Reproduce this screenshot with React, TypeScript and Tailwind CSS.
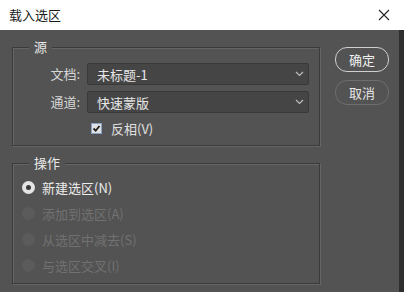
import React from 'react';

const cjk = "font-['Noto_Sans_CJK_SC','Noto_Sans',sans-serif]";

function Chevron() {
  return (
    <svg width="9" height="6" viewBox="0 0 9 6" className="shrink-0">
      <path d="M1 1 L4.5 4.5 L8 1" fill="none" stroke="#bdbdbd" strokeWidth="1.2" />
    </svg>
  );
}

function Select({ value }: { value: string }) {
  return (
    <div className="w-[222px] h-[22px] flex items-center justify-between pl-[9px] pr-[4px] bg-[#454545] border border-[#393939] rounded-[2px]">
      <span className="text-[13px] text-[#e6e6e6] leading-none">{value}</span>
      <Chevron />
    </div>
  );
}

function Group({ title, className, children }: { title: string; className: string; children: React.ReactNode }) {
  return (
    <div className={`relative border border-[#3b3b3b] shadow-[1px_1px_0_#656565,inset_1px_1px_0_#656565] ${className}`}>
      <span className="absolute left-[16px] top-[-9px] px-[5px] bg-[#535353] text-[13px] leading-[16px] text-[#e8e8e8]">{title}</span>
      {children}
    </div>
  );
}

function Radio({ label, active }: { label: string; active?: boolean }) {
  return (
    <div className="h-[26px] flex items-center pl-[9px]">
      {active ? (
        <span className="w-[13px] h-[13px] rounded-full bg-[#e4e4e4] flex items-center justify-center">
          <span className="w-[5px] h-[5px] rounded-full bg-[#3a3a3a]" />
        </span>
      ) : (
        <span className="w-[13px] h-[13px] rounded-full bg-[#5b5b5b]" />
      )}
      <span className={`ml-[7px] text-[13px] leading-none ${active ? 'text-[#ececec]' : 'text-[#717171]'}`}>{label}</span>
    </div>
  );
}

export default function App() {
  return (
    <div className={`w-[404px] h-[292px] flex flex-col overflow-hidden bg-[#535353] ${cjk}`}>
      <div className="h-[30px] shrink-0 bg-white flex items-center justify-between pl-[9px] pr-[14px]">
        <span className="text-[13px] text-[#1b1b1b]">载入选区</span>
        <svg width="12" height="12" viewBox="0 0 12 12">
          <path d="M1 1 L11 11 M11 1 L1 11" stroke="#222" strokeWidth="1.1" />
        </svg>
      </div>
      <div className="flex-1 flex">
        <div className="flex-1 flex pl-[12px] pt-[17px]">
          <div className="w-[308px] flex flex-col">
            <Group title="源" className="h-[99px] pt-[15px]">
              <div className="flex flex-col gap-[6px]">
                <div className="flex items-center gap-[7px]">
                  <span className="w-[67px] text-right text-[13px] text-[#d6d6d6]">文档:</span>
                  <Select value="未标题-1" />
                </div>
                <div className="flex items-center gap-[7px]">
                  <span className="w-[67px] text-right text-[13px] text-[#d6d6d6]">通道:</span>
                  <Select value="快速蒙版" />
                </div>
              </div>
              <div className="flex items-center pl-[78px] mt-[9px]">
                <span className="w-[11px] h-[11px] bg-[#e2e2e2] border border-[#8aa0c8] flex items-center justify-center">
                  <svg width="9" height="9" viewBox="0 0 9 9">
                    <path d="M1.5 4.5 L3.7 6.7 L7.5 2" fill="none" stroke="#1e1e1e" strokeWidth="1.8" />
                  </svg>
                </span>
                <span className="ml-[9px] text-[13px] text-[#e0e0e0] leading-none">反相(V)</span>
              </div>
            </Group>
            <Group title="操作" className="mt-[17px] h-[121px] pt-[10px]">
              <Radio label="新建选区(N)" active />
              <Radio label="添加到选区(A)" />
              <Radio label="从选区中减去(S)" />
              <Radio label="与选区交叉(I)" />
            </Group>
          </div>
          <div className="ml-[15px] flex flex-col gap-[8px]">
            <button className="w-[54px] h-[25px] rounded-[12px] border-[1.5px] border-[#cfcfcf] text-[13px] text-[#f0f0f0] flex items-center justify-center">确定</button>
            <button className="w-[54px] h-[25px] rounded-[12px] border border-[#6e6e6e] text-[13px] text-[#e6e6e6] flex items-center justify-center">取消</button>
          </div>
        </div>
        <div className="w-[5px] bg-[#2e2e2e]" />
      </div>
    </div>
  );
}
